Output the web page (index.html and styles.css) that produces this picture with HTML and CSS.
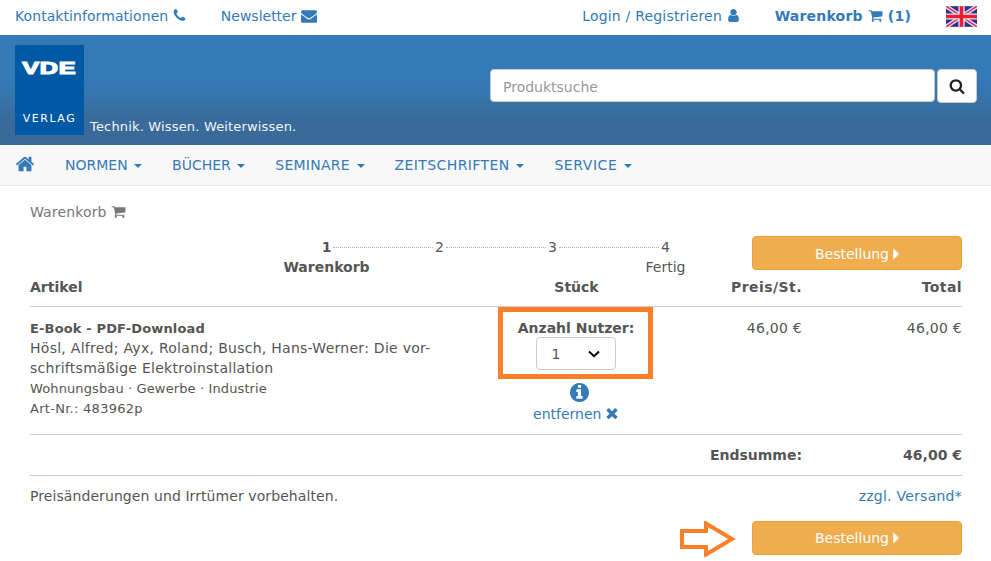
FILE: index.html
```html
<!DOCTYPE html>
<html lang="de">
<head>
<meta charset="utf-8">
<title>Warenkorb</title>
<link rel="stylesheet" href="styles.css">
</head>
<body>
<svg class="defs" width="0" height="0" aria-hidden="true">
  <symbol id="i-phone" viewBox="0 0 1408 1792"><path transform="translate(-192 0)" d="M1600 1240q0 27-10 70.500t-21 68.500q-21 50-122 106-94 51-186 51-27 0-53-3.500t-57.500-12.500-47-14.500-55.500-20.500-49-18q-98-35-175-83-127-79-264-216t-216-264q-48-77-83-175-3-9-18-49t-20.500-55.500-14.500-47-12.500-57.500-3.500-53q0-92 51-186 56-101 106-122 25-11 68.500-21t70.500-10q14 0 21 3 18 6 53 76 11 19 30 54t35 63.500 31 53.500q3 4 17.500 25t21.500 35.500 7 28.500q0 20-28.500 50t-62 55-62 53-28.500 46q0 9 5 22.500t8.500 20.500 14 24 11.500 19q76 137 174 235t235 174q2 1 19 11.500t24 14 20.500 8.500 22.500 5q18 0 46-28.500t53-62 55-62 50-28.500q14 0 28.500 7t35.500 21.500 25 17.500q25 15 53.500 31t63.500 35 54 30q70 35 76 53 3 7 3 21z"/></symbol>
  <symbol id="i-mail" viewBox="0 0 1792 1792"><path d="M1792 710v794q0 66-47 113t-113 47h-1472q-66 0-113-47t-47-113v-794q44 49 101 87 362 246 497 345 57 42 92.500 65.500t94.500 48 110 24.500h2q51 0 110-24.500t94.500-48 92.500-65.500q170-123 498-345 57-39 100-87zm0-294q0 79-49 151t-122 123q-376 261-468 325-10 7-42.500 30.500t-54 38-52 32.500-57.500 27-50 9h-2q-23 0-50-9t-57.500-27-52-32.500-54-38-42.500-30.500q-91-64-262-182.500t-205-142.500q-62-42-117-115.500t-55-136.500q0-78 41.500-130t118.500-52h1472q65 0 112.500 47t47.500 113z"/></symbol>
  <symbol id="i-user" viewBox="0 0 1408 1792"><path transform="translate(-192 0)" d="M1536 1399q0 109-62.500 187t-150.500 78h-854q-88 0-150.500-78t-62.500-187q0-85 8.500-160.500t31.500-152 58.500-131 94-89 134.500-34.500q131 128 313 128t313-128q76 0 134.500 34.500t94 89 58.500 131 31.500 152 8.500 160.500zm-256-887q0 159-112.500 271.500t-271.500 112.500-271.500-112.500-112.500-271.500 112.500-271.500 271.500-112.500 271.500 112.500 112.500 271.500z"/></symbol>
  <symbol id="i-cart" viewBox="0 0 1792 1792"><path d="M704 1536q0 52-38 90t-90 38-90-38-38-90 38-90 90-38 90 38 38 90zm896 0q0 52-38 90t-90 38-90-38-38-90 38-90 90-38 90 38 38 90zm128-1088v512q0 24-16.500 42.500t-40.500 21.500l-1044 122q13 60 13 70 0 16-24 64h920q26 0 45 19t19 45-19 45-45 19h-1024q-26 0-45-19t-19-45q0-11 8-31.500t16-36 21.500-40 15.500-29.500l-177-823h-204q-26 0-45-19t-19-45 19-45 45-19h256q16 0 28.500 6.500t19.500 15.500 13 24.500 8 26 5.500 29.500 4.500 26h1201q26 0 45 19t19 45z"/></symbol>
  <symbol id="i-home" viewBox="0 0 1792 1792"><path d="M1472 992v480q0 26-19 45t-45 19h-384v-384h-256v384h-384q-26 0-45-19t-19-45v-480q0-1 .5-3t.5-3l575-474 575 474q1 2 1 6zm223-69l-62 74q-8 9-21 11h-3q-13 0-21-7l-692-577-692 577q-12 8-24 7-13-2-21-11l-62-74q-8-10-7-23.500t11-21.500l719-599q32-26 76-26t76 26l244 204v-195q0-14 9-23t23-9h192q14 0 23 9t9 23v408l219 182q10 8 11 21.500t-7 23.500z"/></symbol>
  <symbol id="i-search" viewBox="0 0 1792 1792"><path d="M1216 832q0-185-131.500-316.500t-316.500-131.500-316.500 131.500-131.500 316.500 131.500 316.500 316.500 131.500 316.500-131.500 131.500-316.500zm512 832q0 52-38 90t-90 38q-54 0-90-38l-343-342q-179 124-399 124-143 0-273.500-55.500t-225-150-150-225-55.500-273.500 55.500-273.500 150-225 225-150 273.500-55.500 273.500 55.500 225 150 150 225 55.500 273.500q0 220-124 399l343 343q37 37 37 90z"/></symbol>
  <symbol id="i-info" viewBox="128 128 1536 1536"><path d="M1152 1376v-160q0-14-9-23t-23-9h-96v-512q0-14-9-23t-23-9h-320q-14 0-23 9t-9 23v160q0 14 9 23t23 9h96v320h-96q-14 0-23 9t-9 23v160q0 14 9 23t23 9h448q14 0 23-9t9-23zm-128-896v-160q0-14-9-23t-23-9h-192q-14 0-23 9t-9 23v160q0 14 9 23t23 9h192q14 0 23-9t9-23zm640 416q0 209-103 385.500t-279.500 279.500-385.500 103-385.500-103-279.500-279.500-103-385.500 103-385.500 279.500-279.500 385.500-103 385.500 103 279.500 279.500 103 385.500z"/></symbol>
  <symbol id="i-times" viewBox="240 340 1312 1312"><path d="M1490 1322q0 40-28 68l-136 136q-28 28-68 28t-68-28l-294-294-294 294q-28 28-68 28t-68-28l-136-136q-28-28-28-68t28-68l294-294-294-294q-28-28-28-68t28-68l136-136q28-28 68-28t68 28l294 294 294-294q28-28 68-28t68 28l136 136q28 28 28 68t-28 68l-294 294 294 294q28 28 28 68z"/></symbol>
  <symbol id="i-caret" viewBox="576 384 576 1024"><path d="M1152 896q0 26-19 45l-448 448q-19 19-45 19t-45-19-19-45v-896q0-26 19-45t45-19 45 19l448 448q19 19 19 45z"/></symbol>
</svg>

<div class="topbar">
  <a class="toplink toplink-contact" href="#">Kontaktinformationen <svg class="ic ic-phone"><use href="#i-phone"/></svg></a>
  <a class="toplink" href="#">Newsletter <svg class="ic ic-mail"><use href="#i-mail"/></svg></a>
  <span class="spacer"></span>
  <a class="toplink toplink-login" href="#">Login / Registrieren <svg class="ic ic-user"><use href="#i-user"/></svg></a>
  <a class="toplink toplink-strong" href="#">Warenkorb <svg class="ic ic-cart"><use href="#i-cart"/></svg> (1)</a>
  <svg class="flag" viewBox="0 0 60 40" aria-label="English">
    <rect width="60" height="40" fill="#2f2f8f"/>
    <path d="M0 0L60 40M60 0L0 40" stroke="#dcdcf0" stroke-width="8"/>
    <path d="M0 0L60 40M60 0L0 40" stroke="#e0304a" stroke-width="3"/>
    <path d="M30 0V40M0 20H60" stroke="#e8e8f4" stroke-width="12"/>
    <path d="M30 0V40M0 20H60" stroke="#ee1c30" stroke-width="7"/>
  </svg>
</div>

<header class="banner">
  <div class="brand">
    <a class="logo" href="#">
      <span class="logo-vde">VDE</span>
      <span class="logo-verlag">VERLAG</span>
    </a>
    <span class="slogan">Technik. Wissen. Weiterwissen.</span>
  </div>
  <form class="search">
    <input class="search-input" type="text" placeholder="Produktsuche">
    <button class="search-btn" type="button" aria-label="Suchen"><svg class="ic ic-search"><use href="#i-search"/></svg></button>
  </form>
</header>

<nav class="nav">
  <a class="nav-home" href="#" aria-label="Start"><svg class="ic ic-home"><use href="#i-home"/></svg></a>
  <a class="nav-item" href="#">NORMEN <span class="caret"></span></a>
  <a class="nav-item" href="#">BÜCHER <span class="caret"></span></a>
  <a class="nav-item nav-seminare" href="#">SEMINARE <span class="caret"></span></a>
  <a class="nav-item nav-zeit" href="#">ZEITSCHRIFTEN <span class="caret"></span></a>
  <a class="nav-item nav-service" href="#">SERVICE <span class="caret"></span></a>
</nav>

<main class="content">
  <h1 class="page-title">Warenkorb <svg class="ic ic-cart-grey"><use href="#i-cart"/></svg></h1>

  <div class="steps-row">
    <ol class="steps">
      <li class="step step-active"><span class="step-num">1</span><span class="step-label">Warenkorb</span></li>
      <li class="step"><span class="step-num">2</span></li>
      <li class="step"><span class="step-num">3</span></li>
      <li class="step step-last"><span class="step-num">4</span><span class="step-label">Fertig</span></li>
    </ol>
    <a class="order-btn order-btn-top" href="#">Bestellung <svg class="ic ic-caret"><use href="#i-caret"/></svg></a>
  </div>

  <div class="cart-grid cart-head">
    <div>Artikel</div>
    <div class="center head-qty">Stück</div>
    <div class="right head-price">Preis/St.</div>
    <div class="right head-total">Total</div>
  </div>

  <div class="cart-grid cart-row">
    <div class="article">
      <div class="article-type">E-Book - PDF-Download</div>
      <div class="article-title">Hösl, Alfred; Ayx, Roland; Busch, Hans-Werner: Die vor-<br>schriftsmäßige Elektroinstallation</div>
      <div class="article-small">Wohnungsbau · Gewerbe · Industrie</div>
      <div class="article-small article-nr">Art-Nr.: 483962p</div>
    </div>
    <div class="qty">
      <div class="qty-box">
        <div class="qty-label">Anzahl Nutzer:</div>
        <div class="qty-select">
          <span>1</span>
          <svg class="chev" viewBox="0 0 12 8"><path d="M1 1.500L6 6.200L11 1.500" fill="none" stroke="#000" stroke-width="2"/></svg>
        </div>
      </div>
      <a class="info-link" href="#" aria-label="Info"><svg class="ic ic-info"><use href="#i-info"/></svg></a>
      <a class="remove" href="#">entfernen <svg class="ic ic-times"><use href="#i-times"/></svg></a>
    </div>
    <div class="right price">46,00 €</div>
    <div class="right price">46,00 €</div>
  </div>

  <div class="sum-row">
    <span class="sum-label">Endsumme:</span>
    <span class="sum-value">46,00 €</span>
  </div>

  <div class="note-row">
    <span class="note-text">Preisänderungen und Irrtümer vorbehalten.</span>
    <a class="note-link" href="#">zzgl. Versand*</a>
  </div>

  <div class="action-row">
    <svg class="arrow" viewBox="0 0 56 36"><path d="M2 10H26V2.500L52 18L26 33.500V26H2Z" fill="#fff" stroke="#fd7f27" stroke-width="4"/></svg>
    <a class="order-btn" href="#">Bestellung <svg class="ic ic-caret"><use href="#i-caret"/></svg></a>
  </div>
</main>
</body>
</html>
```

FILE: styles.css
```css
* { box-sizing: border-box; }
html, body { margin: 0; padding: 0; }
body {
  width: 991px;
  height: 561px;
  overflow: hidden;
  background: #fff;
  color: #555;
  font-family: "DejaVu Sans", Verdana, sans-serif;
  font-size: 14px;
  line-height: 20px;
}
a { color: #337ab7; text-decoration: none; }
.defs { position: absolute; }
.ic { fill: currentColor; display: inline-block; vertical-align: -2px; }
.ic-phone { width: 13px; height: 15px; }
.ic-mail { width: 16px; height: 16px; vertical-align: -3px; }
.ic-user { width: 13px; height: 15px; }
.ic-cart { width: 15px; height: 15px; }
.ic-cart-grey { width: 15px; height: 15px; }
.ic-home { width: 20px; height: 20px; display: block; }
.ic-search { width: 16px; height: 16px; display: block; }
.ic-info { width: 19px; height: 19px; display: block; }
.ic-times { width: 12px; height: 12px; vertical-align: -1px; }
.ic-caret { width: 6px; height: 10px; vertical-align: 0; }

.topbar {
  height: 35px;
  padding: 0 14px 0 15px;
  display: flex;
  align-items: center;
  gap: 35px;
  background: #fff;
}
.spacer { flex: 1; }
.toplink { white-space: nowrap; margin-top: -3px; }
.toplink-contact { letter-spacing: 0.07px; }
.toplink-login { letter-spacing: 0.2px; }
.toplink-strong { font-weight: 700; letter-spacing: 0.2px; }
.flag { width: 31px; height: 21px; margin-top: -3px; }

.banner {
  height: 110px;
  padding: 10px 14px 10px 15px;
  display: flex;
  justify-content: space-between;
  background: linear-gradient(#337ab7 0, #337ab7 40%, #396a99 80%, #396a99 100%);
}
.brand { display: flex; align-items: flex-end; gap: 6px; }
.logo {
  width: 69px;
  height: 90px;
  background: #0059a4;
  color: #fff;
  display: flex;
  flex-direction: column;
  align-items: center;
}
.logo-vde {
  margin-top: 14px;
  font: 900 17px/20px "Liberation Sans", Arial, sans-serif;
  -webkit-text-stroke: 1.2px #fff;
  letter-spacing: 0.5px;
  transform: scaleX(1.48);
}
.logo-verlag {
  margin-top: 32px;
  font: 400 11px/16px "DejaVu Sans", sans-serif;
  letter-spacing: 1.5px;
}
.slogan {
  color: #f2f6fa;
  font-size: 13px;
  line-height: 20px;
  letter-spacing: 0.17px;
  margin-bottom: -2px;
}

.search { display: flex; gap: 2px; margin-top: 24px; height: 33px; }
.search-input {
  width: 445px;
  height: 33px;
  padding: 2px 12px 0;
  border: 1px solid #ccc;
  border-radius: 4px;
  background: #fff;
  font: 14px "DejaVu Sans", sans-serif;
  color: #555;
  outline: 0;
}
.search-input::placeholder { color: #999; opacity: 1; }
.search-btn {
  width: 40px;
  height: 34px;
  padding: 0;
  border: 1px solid #ccc;
  border-radius: 4px;
  background: #fff;
  color: #222;
  display: flex;
  align-items: center;
  justify-content: center;
}

.nav {
  height: 41px;
  padding: 0 0 1px 15px;
  display: flex;
  align-items: center;
  background: #f8f8f8;
  border-bottom: 1px solid #e7e7e7;
}
.nav-home { margin-right: 15px; margin-top: -2px; }
.nav-item { padding: 0 15px; white-space: nowrap; }
.nav-seminare { letter-spacing: 0.25px; }
.nav-zeit { letter-spacing: 0.4px; }
.nav-service { letter-spacing: 0.55px; }
.caret {
  display: inline-block;
  width: 0;
  height: 0;
  margin-left: 2px;
  vertical-align: 2px;
  border-top: 4px solid #337ab7;
  border-left: 4px solid transparent;
  border-right: 4px solid transparent;
}

.content { padding: 16px 29px 0 30px; }
.page-title {
  margin: 0;
  height: 20px;
  color: #777;
  font-size: 14px;
  font-weight: 400;
  line-height: 20px;
  letter-spacing: 0.15px;
}

.steps-row {
  margin-top: 14px;
  height: 41px;
  display: flex;
  justify-content: space-between;
  align-items: flex-start;
}
.steps {
  margin: 1px 0 0 240px;
  padding: 0;
  list-style: none;
  display: flex;
}
.step {
  width: 113px;
  text-align: center;
  position: relative;
  display: flex;
  flex-direction: column;
  align-items: center;
}
.step::after {
  content: "";
  position: absolute;
  left: 63px;
  width: 100px;
  top: 10px;
  border-top: 1px dotted #b5b5b5;
}
.step-last::after { display: none; }
.step-active { font-weight: 700; }
.step-num { line-height: 20px; }
.step-label { line-height: 20px; white-space: nowrap; }

.order-btn {
  width: 210px;
  height: 34px;
  border: 1px solid #eea236;
  border-radius: 4px;
  background: #f0ad4e;
  color: #fff;
  display: flex;
  align-items: center;
  justify-content: center;
  gap: 4px;
}
.order-btn-top { padding-top: 2px; }
.order-btn .ic-caret { margin-top: -1px; }

.cart-grid {
  display: grid;
  grid-template-columns: 468px 155px 149px 160px;
}
.cart-head {
  height: 30px;
  font-weight: 700;
  border-bottom: 1px solid #ccc;
}
.head-qty { padding-left: 2px; }
.head-price { letter-spacing: 0.45px; }
.head-total { letter-spacing: 0.4px; }
.center { text-align: center; }
.right { text-align: right; }

.cart-row {
  min-height: 128px;
  border-bottom: 1px solid #ccc;
}
.article { padding-top: 11px; }
.article-type {
  font-size: 13px;
  font-weight: 700;
  letter-spacing: 0.15px;
  padding-top: 1px;
  line-height: 19px;
}
.article-title { letter-spacing: 0.27px; }
.article-small {
  font-size: 13px;
  letter-spacing: 0.12px;
  padding-top: 1px;
  line-height: 19px;
}
.article-nr { letter-spacing: 0.28px; }
.price { padding-top: 11px; letter-spacing: 0.25px; }

.qty { display: flex; flex-direction: column; align-items: center; }
.qty-box {
  width: 155px;
  height: 72px;
  padding-top: 6px;
  border: 5px solid #fd7f27;
  display: flex;
  flex-direction: column;
  align-items: center;
}
.qty-label { font-weight: 700; padding-left: 1px; }
.qty-select {
  width: 80px;
  height: 33px;
  margin-top: -1px;
  padding: 0 15px;
  border: 1px solid #ccc;
  border-radius: 4px;
  display: flex;
  align-items: center;
  justify-content: space-between;
}
.chev { width: 12px; height: 8px; }
.info-link { margin: 4px 0 0 8px; }
.remove { margin-top: 2px; }

.sum-row {
  height: 41px;
  display: grid;
  grid-template-columns: 772px 160px;
  align-items: center;
  font-weight: 700;
  text-align: right;
  border-bottom: 1px solid #ccc;
}
.note-row {
  margin-top: 10px;
  height: 20px;
  display: flex;
  justify-content: space-between;
}
.note-text { letter-spacing: 0.08px; }
.note-link { letter-spacing: 0.25px; }
.action-row {
  margin-top: 15px;
  display: flex;
  justify-content: flex-end;
  align-items: flex-start;
  gap: 16px;
}
.arrow { width: 56px; height: 36px; }
```
